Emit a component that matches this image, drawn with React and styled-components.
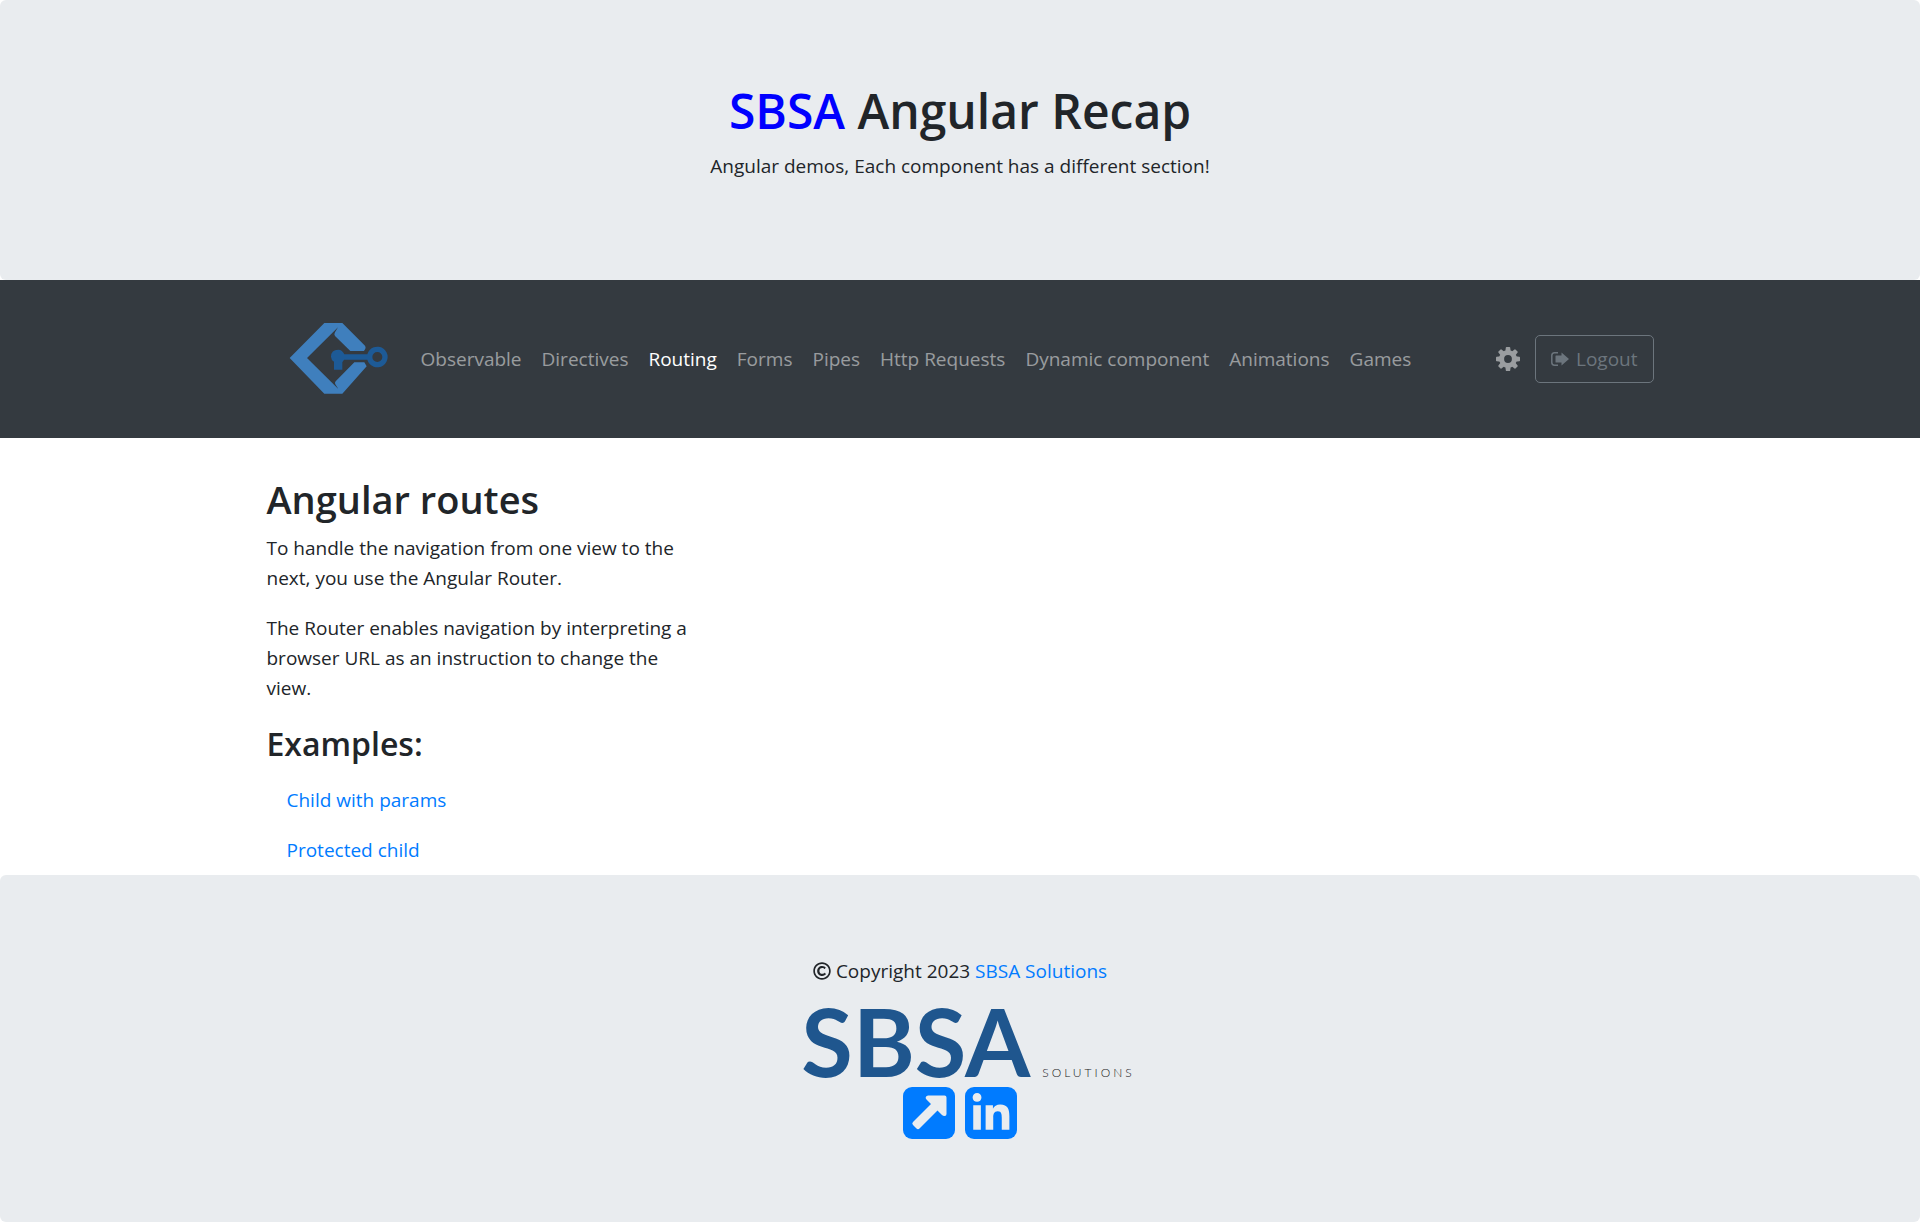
import React from 'react';
import styled, { createGlobalStyle } from 'styled-components';
import { FaLinkedinIn, FaRegCopyright } from 'react-icons/fa';

const Global = createGlobalStyle`
  *, *::before, *::after { box-sizing: border-box; }
  body { margin: 0; background: #fff; color: #212529; font: 400 19px/30px "Open Sans", "Noto Sans", sans-serif; }
  h1, h2, h3 { margin: 0 0 10px; font-weight: 600; }
  p { margin: 0 0 20px; }
  a { color: #007bff; text-decoration: none; }
`;

const Banner = styled.div`
  padding: 81px 40px 79px;
  background: #e9ecef;
  border-radius: 6px;
  text-align: center;
`;

const Title = styled.h1`
  font-size: 48px;
  line-height: 60px;
`;

const Accent = styled.span`
  color: #0000ff;
`;

const NavBar = styled.nav`
  padding: 35px 0;
  background: #343a40;
`;

const Container = styled.div`
  display: flex;
  align-items: center;
  max-width: 1425px;
  margin: 0 auto;
  padding: 0 19px;
`;

const Brand = styled.a`
  display: flex;
  margin: 0 16px 0 18px;
  svg { display: block; width: 110px; height: 88px; }
`;

const Links = styled.ul`
  display: flex;
  flex: 1;
  margin: 0;
  padding: 0;
  list-style: none;
`;

const NavLink = styled.a`
  display: block;
  padding: 10px;
  color: ${(p) => (p.$active ? '#fff' : 'rgba(255, 255, 255, 0.5)')};
`;

const Tools = styled.div`
  display: flex;
  align-items: center;
  gap: 15px;
`;

const IconButton = styled.button`
  padding: 0;
  border: 0;
  background: none;
  color: #9a9da0;
  cursor: pointer;
  svg { display: block; width: 24px; height: 24px; }
`;

const LogoutButton = styled.button`
  display: flex;
  align-items: center;
  gap: 7px;
  padding: 8px 15px;
  border: 1px solid #6c757d;
  border-radius: 5px;
  background: none;
  color: #6c757d;
  font: inherit;
  cursor: pointer;
  svg { width: 18px; height: 14px; }
`;

const Content = styled.main`
  max-width: 1425px;
  margin: 0 auto;
  padding: 37px 19px 0;
`;

const Column = styled.section`
  width: 33.33%;
  padding-right: 32px;
`;

const Heading = styled.h2`
  font-size: 38px;
  line-height: 48px;
`;

const SubHeading = styled.h3`
  font-size: 32px;
  line-height: 42px;
`;

const ExampleLink = styled.a`
  display: block;
  padding: 10px 20px;
`;

const Copyright = styled.p`
  display: flex;
  justify-content: center;
  align-items: center;
  gap: 5px;
  svg { width: 18px; height: 18px; }
`;

const Wordmark = styled.div`
  display: flex;
  justify-content: center;
  align-items: baseline;
  gap: 12px;
  height: 79px;
  padding-left: 16px;
  font-family: Lato, sans-serif;
  line-height: 70px;
`;

const WordmarkName = styled.span`
  color: #1f568e;
  font-size: 94px;
  font-weight: 700;
`;

const WordmarkTag = styled.span`
  color: #222;
  font-size: 12px;
  font-weight: 300;
  letter-spacing: 3px;
`;

const Social = styled.div`
  display: flex;
  justify-content: center;
  gap: 10px;
  padding: 2px 0 4px;
`;

const SocialLink = styled.a`
  display: block;
  > svg { display: block; width: 52px; height: 52px; }
`;

const LogoIcon = () => (
  <svg viewBox="0 0 330 264" aria-hidden="true">
    <path
      fill="#3f7fbd"
      d="M118 24h54l68 68q3 5 1 9l-4 7h-41l-46-45q-4-5 0-11l9-15L66 129l94 93-9-14q-3-5 1-9l56-57h30l7 12-73 82h-54L14 129z"
    />
    <path
      fill="#1d5a96"
      fillRule="evenodd"
      d="M160 104q12 0 18 14h69a31 31 0 1 1 0 16h-70l-5 8v22h-25v-24q-9-6-9-15 0-21 22-21zM277 111a15 15 0 1 0 0 30 15 15 0 0 0 0-30z"
    />
  </svg>
);

const teeth = [0, 45, 90, 135, 180, 225, 270, 315];

const GearIcon = () => (
  <svg viewBox="0 0 24 24" fill="currentColor" aria-hidden="true">
    <circle cx="12" cy="12" r="6.4" fill="none" stroke="currentColor" strokeWidth="5" />
    {teeth.map((a) => (
      <path key={a} d="M9.8.6q.2-.6.7-.6h3q.5 0 .7.6L14.7 5H9.300z" transform={`rotate(${a} 12 12)`} />
    ))}
  </svg>
);

const LogoutIcon = () => (
  <svg viewBox="0 0 18 14" fill="currentColor" aria-hidden="true">
    <path fill="none" stroke="currentColor" strokeWidth="1.5" d="M7 .8H3.500Q.8.8.8 3.500v7q0 2.700 2.700 2.700H7" />
    <path d="M10.500.4v3H5q-.5 0-.5.5v6q0 .5.5.5h5.500v3.200L18 7z" />
  </svg>
);

const ArrowSquareIcon = () => (
  <svg viewBox="0 0 52 52" aria-hidden="true">
    <rect width="52" height="52" rx="9" fill="#007bff" />
    <path
      fill="#e9ecef"
      d="M25 8.500h16.500q2 0 2 2V27q0 2-1.800 2t-2.700-1l-4.500-4.500L16.500 41.500q-1.500 1.500-3 0L10 38q-1.500-1.500 0-3L28 17l-4.500-4.500q-1-1-.8-2.200T25 8.500z"
    />
  </svg>
);

const LinkedinIcon = () => (
  <svg viewBox="0 0 52 52" color="#e9ecef" aria-hidden="true">
    <rect width="52" height="52" rx="9" fill="#007bff" />
    <FaLinkedinIn x="5" y="6" size={42} />
  </svg>
);

const items = ['Observable', 'Directives', 'Routing', 'Forms', 'Pipes', 'Http Requests', 'Dynamic component', 'Animations', 'Games'];

export default function App() {
  return (
    <>
      <Global />
      <Banner as="header">
        <Title><Accent>SBSA</Accent> Angular Recap</Title>
        <p>Angular demos, Each component has a different section!</p>
      </Banner>
      <NavBar>
        <Container>
          <Brand href="#" aria-label="Home"><LogoIcon /></Brand>
          <Links>
            {items.map((t) => (
              <li key={t}><NavLink href="#" $active={t === 'Routing'}>{t}</NavLink></li>
            ))}
          </Links>
          <Tools>
            <IconButton type="button" aria-label="Settings"><GearIcon /></IconButton>
            <LogoutButton type="button"><LogoutIcon />Logout</LogoutButton>
          </Tools>
        </Container>
      </NavBar>
      <Content>
        <Column>
          <Heading>Angular routes</Heading>
          <p>To handle the navigation from one view to the next, you use the Angular Router.</p>
          <p>The Router enables navigation by interpreting a browser URL as an instruction to change the view.</p>
          <SubHeading>Examples:</SubHeading>
          <ExampleLink href="#">Child with params</ExampleLink>
          <ExampleLink href="#">Protected child</ExampleLink>
        </Column>
      </Content>
      <Banner as="footer">
        <Copyright>
          <FaRegCopyright aria-hidden="true" />
          <span>Copyright 2023 <a href="#">SBSA Solutions</a></span>
        </Copyright>
        <Wordmark>
          <WordmarkName>SBSA</WordmarkName>
          <WordmarkTag>SOLUTIONS</WordmarkTag>
        </Wordmark>
        <Social>
          <SocialLink href="#" aria-label="Website"><ArrowSquareIcon /></SocialLink>
          <SocialLink href="#" aria-label="LinkedIn"><LinkedinIcon /></SocialLink>
        </Social>
      </Banner>
    </>
  );
}
